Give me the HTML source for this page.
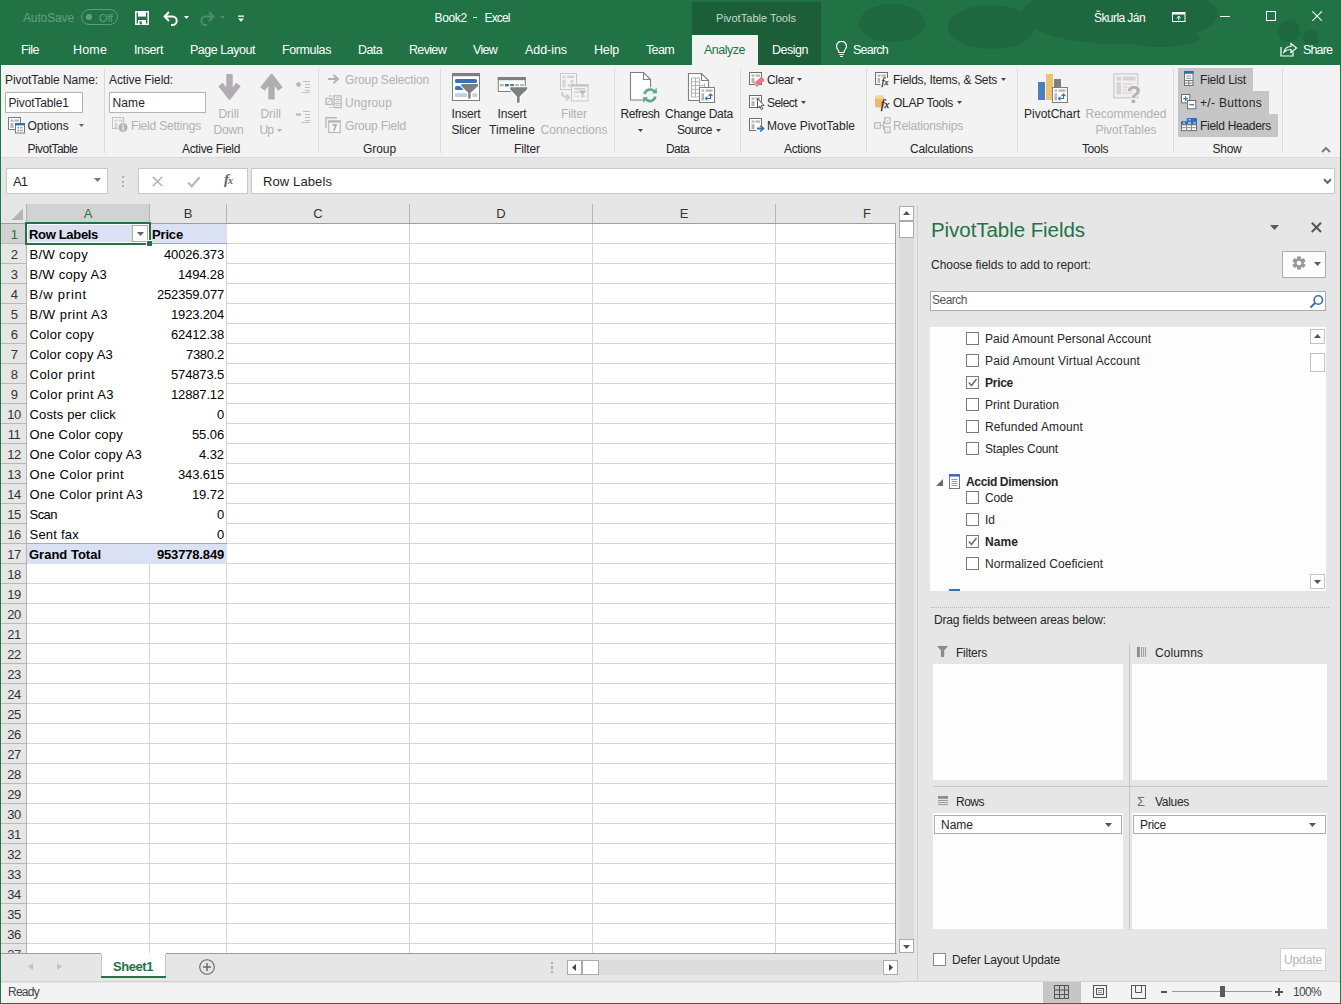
<!DOCTYPE html>
<html><head><meta charset="utf-8"><title>Book2 - Excel</title>
<style>
html,body{margin:0;padding:0}
body{width:1341px;height:1004px;overflow:hidden;position:relative;background:#217346;font-family:"Liberation Sans",sans-serif;}
.t{position:absolute;white-space:pre;line-height:1;color:#262626;font-family:"Liberation Sans",sans-serif;}
.r{position:absolute;display:block}
</style></head><body>
<div class="r" style="left:0px;top:0px;width:1341px;height:65px;background:#217346;"></div>
<svg class="r" style="left:820px;top:0" width="521" height="65" viewBox="820 0 521 65"><g fill="#1e683f"><ellipse cx="892" cy="23" rx="33" ry="19"/><ellipse cx="991" cy="27" rx="43" ry="22"/><ellipse cx="1120" cy="14" rx="98" ry="30"/><ellipse cx="1160" cy="38" rx="40" ry="9"/><circle cx="1289" cy="31" r="11"/><circle cx="1311" cy="38" r="8"/></g></svg>
<div class="r" style="left:692px;top:2px;width:129px;height:63px;background:#1b5e38;"></div>
<div class="r" style="left:692px;top:35px;width:66px;height:30px;background:#f3f3f3;"></div>
<div class="r" style="left:1px;top:65px;width:1339px;height:92px;background:#f3f3f3;"></div>
<div class="r" style="left:1px;top:157px;width:1339px;height:1px;background:#dadada;"></div>
<div class="r" style="left:1px;top:158px;width:1339px;height:824px;background:#e6e6e6;"></div>
<div class="r" style="left:1px;top:982px;width:1339px;height:21px;background:#f3f3f3;"></div>
<span class="t " style="left:23.00px;top:12.00px;font-size:12px;letter-spacing:-0.130px;color:#63a07f;">AutoSave</span>
<div class="r" style="left:81px;top:9px;width:37px;height:16px;border:1px solid #5f9d7c;border-radius:9px;box-sizing:border-box"></div>
<div class="r" style="left:86px;top:14px;width:6px;height:6px;border-radius:3px;background:#63a07f"></div>
<span class="t " style="left:99.00px;top:12.50px;font-size:11px;letter-spacing:-0.157px;color:#63a07f;">Off</span>
<svg class="r" style="left:135px;top:11px" width="14" height="14" viewBox="0 0 14 14"><path d="M0.8 0.8H13.2V13.2H0.8Z" fill="none" stroke="#fff" stroke-width="1.6"/><rect x="3" y="1" width="8" height="4.6" fill="#fff"/><rect x="3" y="9" width="8" height="4.5" fill="#fff"/><rect x="4.6" y="10.4" width="2.2" height="3" fill="#217346"/></svg>
<svg class="r" style="left:162px;top:9.5px" width="18" height="16" viewBox="0 0 18 16"><path d="M3 6.5H10.5A4.2 4.2 0 0 1 10.5 14.9H9" fill="none" stroke="#fff" stroke-width="2"/><path d="M7 2L2.6 6.5L7 11" fill="none" stroke="#fff" stroke-width="2"/></svg>
<svg class="r" style="left:184.0px;top:16.0px" width="5" height="3" viewBox="0 0 5 3"><path d="M0 0H5L2.5 3Z" fill="#fff"/></svg>
<svg class="r" style="left:198px;top:9.5px" width="18" height="16" viewBox="0 0 18 16"><path d="M15 6.5H7.5A4.2 4.2 0 0 0 7.5 14.9H9" fill="none" stroke="#4d8f6c" stroke-width="2"/><path d="M11 2L15.4 6.5L11 11" fill="none" stroke="#4d8f6c" stroke-width="2"/></svg>
<svg class="r" style="left:219.5px;top:16.0px" width="5" height="3" viewBox="0 0 5 3"><path d="M0 0H5L2.5 3Z" fill="#4d8f6c"/></svg>
<svg class="r" style="left:236.5px;top:14.5px" width="8" height="8" viewBox="0 0 8 8"><rect x="1" y="0.5" width="6" height="1.3" fill="#fff"/><path d="M1 3.5H7L4 6.8Z" fill="#fff"/></svg>
<span class="t " style="left:434.50px;top:12.00px;font-size:12px;letter-spacing:-0.365px;color:#fff;">Book2</span>
<div class="r" style="left:473.3px;top:17px;width:3.8px;height:1.2px;background:#fff;"></div>
<span class="t " style="left:484.60px;top:12.00px;font-size:12px;letter-spacing:-0.889px;color:#fff;">Excel</span>
<span class="t " style="left:716.00px;top:12.50px;font-size:11px;letter-spacing:0.045px;color:#c8ddd0;">PivotTable Tools</span>
<span class="t " style="left:1094.00px;top:12.00px;font-size:12px;letter-spacing:-0.570px;color:#fff;">Škurla Ján</span>
<svg class="r" style="left:1172px;top:11.5px" width="14" height="11" viewBox="0 0 14 11"><rect x="0.5" y="0.5" width="12.5" height="9" fill="none" stroke="#fff"/><rect x="0.5" y="0.5" width="12.5" height="2" fill="#fff"/><path d="M6.75 4.2V8.2M4.7 6.2L6.75 4.2L8.8 6.2" fill="none" stroke="#fff"/></svg>
<div class="r" style="left:1220px;top:16px;width:10px;height:1px;background:#fff;"></div>
<div class="r" style="left:1266px;top:11px;width:10px;height:10px;border:1px solid #fff;box-sizing:border-box"></div>
<svg class="r" style="left:1312px;top:11.3px" width="10" height="10" viewBox="0 0 10 10"><path d="M0.3 0.3L9.9 9.9M9.9 0.3L0.3 9.9" stroke="#fff" stroke-width="1.1"/></svg>
<span class="t " style="left:21.00px;top:43.75px;font-size:12.5px;letter-spacing:-0.535px;color:#fff;">File</span>
<span class="t " style="left:73.00px;top:43.75px;font-size:12.5px;letter-spacing:0.164px;color:#fff;">Home</span>
<span class="t " style="left:134.00px;top:43.75px;font-size:12.5px;letter-spacing:-0.377px;color:#fff;">Insert</span>
<span class="t " style="left:190.00px;top:43.75px;font-size:12.5px;letter-spacing:-0.472px;color:#fff;">Page Layout</span>
<span class="t " style="left:282.00px;top:43.75px;font-size:12.5px;letter-spacing:-0.387px;color:#fff;">Formulas</span>
<span class="t " style="left:358.00px;top:43.75px;font-size:12.5px;letter-spacing:-0.601px;color:#fff;">Data</span>
<span class="t " style="left:409.00px;top:43.75px;font-size:12.5px;letter-spacing:-0.664px;color:#fff;">Review</span>
<span class="t " style="left:473.00px;top:43.75px;font-size:12.5px;letter-spacing:-0.717px;color:#fff;">View</span>
<span class="t " style="left:525.00px;top:43.75px;font-size:12.5px;letter-spacing:-0.055px;color:#fff;">Add-ins</span>
<span class="t " style="left:594.00px;top:43.75px;font-size:12.5px;letter-spacing:-0.177px;color:#fff;">Help</span>
<span class="t " style="left:646.00px;top:43.75px;font-size:12.5px;letter-spacing:-0.642px;color:#fff;">Team</span>
<span class="t " style="left:772.00px;top:43.75px;font-size:12.5px;letter-spacing:-0.485px;color:#fff;">Design</span>
<span class="t " style="left:853.00px;top:43.75px;font-size:12.5px;letter-spacing:-0.768px;color:#fff;">Search</span>
<span class="t " style="left:1303.00px;top:43.75px;font-size:12.5px;letter-spacing:-0.871px;color:#fff;">Share</span>
<span class="t " style="left:704.00px;top:43.75px;font-size:12.5px;letter-spacing:-0.496px;color:#217346;">Analyze</span>
<svg class="r" style="left:835px;top:41px" width="13" height="17" viewBox="0 0 13 17"><path d="M4 11.5C4 9 1.5 8 1.5 5.3A5 5 0 0 1 11.5 5.3C11.5 8 9 9 9 11.5Z" fill="none" stroke="#fff" stroke-width="1.2"/><path d="M4.3 13.5H8.7M5 15.5H8" stroke="#fff" stroke-width="1.1"/></svg>
<svg class="r" style="left:1280px;top:41px" width="18" height="16" viewBox="0 0 18 16"><path d="M1 6V15H13V11" fill="none" stroke="#fff" stroke-width="1.2"/><path d="M4 11C5 7 8 5.5 11 5.5V2.5L16.5 7L11 11.5V8.5C8 8.5 6 9 4 11Z" fill="none" stroke="#fff" stroke-width="1.2"/></svg>
<div class="r" style="left:104px;top:69px;width:1px;height:84px;background:#d9d9d9;"></div>
<div class="r" style="left:318px;top:69px;width:1px;height:84px;background:#d9d9d9;"></div>
<div class="r" style="left:440px;top:69px;width:1px;height:84px;background:#d9d9d9;"></div>
<div class="r" style="left:614px;top:69px;width:1px;height:84px;background:#d9d9d9;"></div>
<div class="r" style="left:740px;top:69px;width:1px;height:84px;background:#d9d9d9;"></div>
<div class="r" style="left:866px;top:69px;width:1px;height:84px;background:#d9d9d9;"></div>
<div class="r" style="left:1017px;top:69px;width:1px;height:84px;background:#d9d9d9;"></div>
<div class="r" style="left:1173px;top:69px;width:1px;height:84px;background:#d9d9d9;"></div>
<div class="r" style="left:1282px;top:69px;width:1px;height:84px;background:#d9d9d9;"></div>
<span class="t " style="left:27.50px;top:143.00px;font-size:12px;letter-spacing:-0.537px;">PivotTable</span>
<span class="t " style="left:182.00px;top:143.00px;font-size:12px;letter-spacing:-0.335px;">Active Field</span>
<span class="t " style="left:363.00px;top:143.00px;font-size:12px;letter-spacing:-0.070px;">Group</span>
<span class="t " style="left:514.00px;top:143.00px;font-size:12px;letter-spacing:-0.111px;">Filter</span>
<span class="t " style="left:666.00px;top:143.00px;font-size:12px;letter-spacing:-0.587px;">Data</span>
<span class="t " style="left:784.00px;top:143.00px;font-size:12px;letter-spacing:-0.336px;">Actions</span>
<span class="t " style="left:910.00px;top:143.00px;font-size:12px;letter-spacing:-0.197px;">Calculations</span>
<span class="t " style="left:1082.00px;top:143.00px;font-size:12px;letter-spacing:-0.403px;">Tools</span>
<span class="t " style="left:1212.50px;top:143.00px;font-size:12px;letter-spacing:-0.254px;">Show</span>
<span class="t " style="left:5.00px;top:74.00px;font-size:12px;letter-spacing:-0.065px;">PivotTable Name:</span>
<div class="r" style="left:5px;top:92px;width:78px;height:21px;background:#fff;border:1px solid #b3b3b3;box-sizing:border-box;"></div>
<span class="t " style="left:8.50px;top:97.00px;font-size:12px;letter-spacing:-0.167px;">PivotTable1</span>
<span class="t " style="left:27.50px;top:120.00px;font-size:12px;letter-spacing:-0.022px;">Options</span>
<svg class="r" style="left:79.0px;top:124.2px" width="5" height="3" viewBox="0 0 5 3"><path d="M0 0H5L2.5 3Z" fill="#666"/></svg>
<span class="t " style="left:109.00px;top:74.00px;font-size:12px;letter-spacing:-0.104px;">Active Field:</span>
<div class="r" style="left:109px;top:92px;width:97px;height:21px;background:#fff;border:1px solid #b3b3b3;box-sizing:border-box;"></div>
<span class="t " style="left:112.50px;top:97.00px;font-size:12px;letter-spacing:0.123px;">Name</span>
<span class="t " style="left:131.00px;top:120.00px;font-size:12px;letter-spacing:-0.193px;color:#b2b0b2;">Field Settings</span>
<span class="t " style="left:218.45px;top:108.00px;font-size:12px;letter-spacing:-0.032px;color:#b2b0b2;">Drill</span>
<span class="t " style="left:213.60px;top:124.00px;font-size:12px;letter-spacing:-0.170px;color:#b2b0b2;">Down</span>
<span class="t " style="left:260.45px;top:108.00px;font-size:12px;letter-spacing:-0.032px;color:#b2b0b2;">Drill</span>
<span class="t " style="left:259.50px;top:124.00px;font-size:12px;letter-spacing:-0.920px;color:#b2b0b2;">Up</span>
<svg class="r" style="left:277.0px;top:128.5px" width="5" height="3" viewBox="0 0 5 3"><path d="M0 0H5L2.5 3Z" fill="#b2b0b2"/></svg>
<span class="t " style="left:345.00px;top:74.00px;font-size:12px;letter-spacing:-0.137px;color:#b2b0b2;">Group Selection</span>
<span class="t " style="left:345.00px;top:97.00px;font-size:12px;letter-spacing:0.138px;color:#b2b0b2;">Ungroup</span>
<span class="t " style="left:345.00px;top:120.00px;font-size:12px;letter-spacing:-0.154px;color:#b2b0b2;">Group Field</span>
<span class="t " style="left:451.50px;top:108.00px;font-size:12px;letter-spacing:-0.169px;">Insert</span>
<span class="t " style="left:451.50px;top:124.00px;font-size:12px;letter-spacing:-0.168px;">Slicer</span>
<span class="t " style="left:497.50px;top:108.00px;font-size:12px;letter-spacing:-0.169px;">Insert</span>
<span class="t " style="left:489.00px;top:124.00px;font-size:12px;letter-spacing:0.137px;">Timeline</span>
<span class="t " style="left:561.00px;top:108.00px;font-size:12px;letter-spacing:-0.111px;color:#b2b0b2;">Filter</span>
<span class="t " style="left:540.50px;top:124.00px;font-size:12px;letter-spacing:0.026px;color:#b2b0b2;">Connections</span>
<span class="t " style="left:620.50px;top:108.00px;font-size:12px;letter-spacing:-0.431px;">Refresh</span>
<svg class="r" style="left:638.0px;top:128.5px" width="5" height="3" viewBox="0 0 5 3"><path d="M0 0H5L2.5 3Z" fill="#444"/></svg>
<span class="t " style="left:665.00px;top:108.00px;font-size:12px;letter-spacing:-0.247px;">Change Data</span>
<span class="t " style="left:677.00px;top:124.00px;font-size:12px;letter-spacing:-0.504px;">Source</span>
<svg class="r" style="left:716.0px;top:128.5px" width="5" height="3" viewBox="0 0 5 3"><path d="M0 0H5L2.5 3Z" fill="#444"/></svg>
<span class="t " style="left:767.00px;top:74.00px;font-size:12px;letter-spacing:-0.335px;">Clear</span>
<svg class="r" style="left:797.0px;top:78.0px" width="5" height="3" viewBox="0 0 5 3"><path d="M0 0H5L2.5 3Z" fill="#444"/></svg>
<span class="t " style="left:767.00px;top:97.00px;font-size:12px;letter-spacing:-0.559px;">Select</span>
<svg class="r" style="left:801.0px;top:101.0px" width="5" height="3" viewBox="0 0 5 3"><path d="M0 0H5L2.5 3Z" fill="#444"/></svg>
<span class="t " style="left:767.00px;top:120.00px;font-size:12px;letter-spacing:-0.003px;">Move PivotTable</span>
<span class="t " style="left:893.00px;top:74.00px;font-size:12px;letter-spacing:-0.287px;">Fields, Items, &amp; Sets</span>
<svg class="r" style="left:1001.0px;top:78.0px" width="5" height="3" viewBox="0 0 5 3"><path d="M0 0H5L2.5 3Z" fill="#444"/></svg>
<span class="t " style="left:893.00px;top:97.00px;font-size:12px;letter-spacing:-0.293px;">OLAP Tools</span>
<svg class="r" style="left:957.0px;top:101.0px" width="5" height="3" viewBox="0 0 5 3"><path d="M0 0H5L2.5 3Z" fill="#444"/></svg>
<span class="t " style="left:893.00px;top:120.00px;font-size:12px;letter-spacing:-0.157px;color:#b2b0b2;">Relationships</span>
<span class="t " style="left:1024.00px;top:108.00px;font-size:12px;letter-spacing:-0.002px;">PivotChart</span>
<span class="t " style="left:1085.50px;top:108.00px;font-size:12px;letter-spacing:-0.034px;color:#b2b0b2;">Recommended</span>
<span class="t " style="left:1095.50px;top:124.00px;font-size:12px;letter-spacing:-0.033px;color:#b2b0b2;">PivotTables</span>
<div class="r" style="left:1178px;top:68px;width:75px;height:23px;background:#c6c6c6;"></div>
<div class="r" style="left:1178px;top:91px;width:91px;height:23px;background:#c6c6c6;"></div>
<div class="r" style="left:1178px;top:114px;width:100px;height:23px;background:#c6c6c6;"></div>
<span class="t " style="left:1200.00px;top:74.00px;font-size:12px;letter-spacing:-0.202px;">Field List</span>
<span class="t " style="left:1200.00px;top:97.00px;font-size:12px;letter-spacing:0.330px;">+/- Buttons</span>
<span class="t " style="left:1200.00px;top:120.00px;font-size:12px;letter-spacing:-0.285px;">Field Headers</span>
<svg class="r" style="left:1320.5px;top:145.5px" width="10" height="7" viewBox="0 0 10 7"><path d="M1 6L5 2L9 6" fill="none" stroke="#777" stroke-width="1.8"/></svg>
<div class="r" style="left:6px;top:168px;width:102px;height:26px;background:#fff;border:1px solid #c8c8c8;box-sizing:border-box;"></div>
<span class="t " style="left:13.00px;top:175.00px;font-size:13px;letter-spacing:-0.950px;">A1</span>
<svg class="r" style="left:93.5px;top:178.0px" width="7" height="4" viewBox="0 0 7 4"><path d="M0 0H7L3.5 4Z" fill="#777"/></svg>
<div class="r" style="left:121.8px;top:176px;width:2.2px;height:2.2px;background:#b0b0b0;"></div>
<div class="r" style="left:121.8px;top:180.5px;width:2.2px;height:2.2px;background:#b0b0b0;"></div>
<div class="r" style="left:121.8px;top:185px;width:2.2px;height:2.2px;background:#b0b0b0;"></div>
<div class="r" style="left:138px;top:168px;width:110px;height:26px;background:#fff;border:1px solid #c8c8c8;box-sizing:border-box;"></div>
<svg class="r" style="left:151.5px;top:176px" width="11" height="11" viewBox="0 0 11 11"><path d="M0.8 0.8L10.2 10.2M10.2 0.8L0.8 10.2" stroke="#bbb" stroke-width="1.8"/></svg>
<svg class="r" style="left:186.5px;top:175.5px" width="14" height="12" viewBox="0 0 14 12"><path d="M1 6.5L4.8 10.3L12.6 1.2" fill="none" stroke="#bbb" stroke-width="2.2"/></svg>
<span class="t" style="left:224px;top:172px;font-family:'Liberation Serif',serif;font-style:italic;font-weight:700;font-size:15px;color:#666">f<span style="font-size:10px;margin-left:-1px">x</span></span>
<div class="r" style="left:251px;top:168px;width:1084px;height:26px;background:#fff;border:1px solid #c8c8c8;box-sizing:border-box;"></div>
<span class="t " style="left:263.00px;top:175.00px;font-size:13px;letter-spacing:0.107px;">Row Labels</span>
<svg class="r" style="left:1322.5px;top:177.5px" width="9" height="7" viewBox="0 0 9 7"><path d="M1 1.2L4.5 4.8L8 1.2" fill="none" stroke="#666" stroke-width="2"/></svg>
<div class="r" style="left:1px;top:204px;width:895px;height:749px;background:#fff;"></div>
<div class="r" style="left:1px;top:204px;width:895px;height:19px;background:#e6e6e6;"></div>
<div class="r" style="left:1px;top:204px;width:26px;height:749px;background:#e6e6e6;"></div>
<div class="r" style="left:27px;top:204px;width:123px;height:19px;background:#d2d2d2;"></div>
<div class="r" style="left:1px;top:224px;width:26px;height:19px;background:#d2d2d2;"></div>
<div class="r" style="left:1px;top:223px;width:895px;height:1px;background:#9d9d9d;"></div>
<div class="r" style="left:149px;top:224px;width:1px;height:729px;background:#d4d4d4;"></div>
<div class="r" style="left:149px;top:204px;width:1px;height:19px;background:#b5b5b5;"></div>
<div class="r" style="left:226px;top:224px;width:1px;height:729px;background:#d4d4d4;"></div>
<div class="r" style="left:226px;top:204px;width:1px;height:19px;background:#b5b5b5;"></div>
<div class="r" style="left:409px;top:224px;width:1px;height:729px;background:#d4d4d4;"></div>
<div class="r" style="left:409px;top:204px;width:1px;height:19px;background:#b5b5b5;"></div>
<div class="r" style="left:592px;top:224px;width:1px;height:729px;background:#d4d4d4;"></div>
<div class="r" style="left:592px;top:204px;width:1px;height:19px;background:#b5b5b5;"></div>
<div class="r" style="left:775px;top:224px;width:1px;height:729px;background:#d4d4d4;"></div>
<div class="r" style="left:775px;top:204px;width:1px;height:19px;background:#b5b5b5;"></div>
<div class="r" style="left:27px;top:243px;width:869px;height:1px;background:#d4d4d4;"></div>
<div class="r" style="left:1px;top:243px;width:25px;height:1px;background:#b8b8b8;"></div>
<div class="r" style="left:27px;top:263px;width:869px;height:1px;background:#d4d4d4;"></div>
<div class="r" style="left:1px;top:263px;width:25px;height:1px;background:#b8b8b8;"></div>
<div class="r" style="left:27px;top:283px;width:869px;height:1px;background:#d4d4d4;"></div>
<div class="r" style="left:1px;top:283px;width:25px;height:1px;background:#b8b8b8;"></div>
<div class="r" style="left:27px;top:303px;width:869px;height:1px;background:#d4d4d4;"></div>
<div class="r" style="left:1px;top:303px;width:25px;height:1px;background:#b8b8b8;"></div>
<div class="r" style="left:27px;top:323px;width:869px;height:1px;background:#d4d4d4;"></div>
<div class="r" style="left:1px;top:323px;width:25px;height:1px;background:#b8b8b8;"></div>
<div class="r" style="left:27px;top:343px;width:869px;height:1px;background:#d4d4d4;"></div>
<div class="r" style="left:1px;top:343px;width:25px;height:1px;background:#b8b8b8;"></div>
<div class="r" style="left:27px;top:363px;width:869px;height:1px;background:#d4d4d4;"></div>
<div class="r" style="left:1px;top:363px;width:25px;height:1px;background:#b8b8b8;"></div>
<div class="r" style="left:27px;top:383px;width:869px;height:1px;background:#d4d4d4;"></div>
<div class="r" style="left:1px;top:383px;width:25px;height:1px;background:#b8b8b8;"></div>
<div class="r" style="left:27px;top:403px;width:869px;height:1px;background:#d4d4d4;"></div>
<div class="r" style="left:1px;top:403px;width:25px;height:1px;background:#b8b8b8;"></div>
<div class="r" style="left:27px;top:423px;width:869px;height:1px;background:#d4d4d4;"></div>
<div class="r" style="left:1px;top:423px;width:25px;height:1px;background:#b8b8b8;"></div>
<div class="r" style="left:27px;top:443px;width:869px;height:1px;background:#d4d4d4;"></div>
<div class="r" style="left:1px;top:443px;width:25px;height:1px;background:#b8b8b8;"></div>
<div class="r" style="left:27px;top:463px;width:869px;height:1px;background:#d4d4d4;"></div>
<div class="r" style="left:1px;top:463px;width:25px;height:1px;background:#b8b8b8;"></div>
<div class="r" style="left:27px;top:483px;width:869px;height:1px;background:#d4d4d4;"></div>
<div class="r" style="left:1px;top:483px;width:25px;height:1px;background:#b8b8b8;"></div>
<div class="r" style="left:27px;top:503px;width:869px;height:1px;background:#d4d4d4;"></div>
<div class="r" style="left:1px;top:503px;width:25px;height:1px;background:#b8b8b8;"></div>
<div class="r" style="left:27px;top:523px;width:869px;height:1px;background:#d4d4d4;"></div>
<div class="r" style="left:1px;top:523px;width:25px;height:1px;background:#b8b8b8;"></div>
<div class="r" style="left:27px;top:543px;width:869px;height:1px;background:#d4d4d4;"></div>
<div class="r" style="left:1px;top:543px;width:25px;height:1px;background:#b8b8b8;"></div>
<div class="r" style="left:27px;top:563px;width:869px;height:1px;background:#d4d4d4;"></div>
<div class="r" style="left:1px;top:563px;width:25px;height:1px;background:#b8b8b8;"></div>
<div class="r" style="left:27px;top:583px;width:869px;height:1px;background:#d4d4d4;"></div>
<div class="r" style="left:1px;top:583px;width:25px;height:1px;background:#b8b8b8;"></div>
<div class="r" style="left:27px;top:603px;width:869px;height:1px;background:#d4d4d4;"></div>
<div class="r" style="left:1px;top:603px;width:25px;height:1px;background:#b8b8b8;"></div>
<div class="r" style="left:27px;top:623px;width:869px;height:1px;background:#d4d4d4;"></div>
<div class="r" style="left:1px;top:623px;width:25px;height:1px;background:#b8b8b8;"></div>
<div class="r" style="left:27px;top:643px;width:869px;height:1px;background:#d4d4d4;"></div>
<div class="r" style="left:1px;top:643px;width:25px;height:1px;background:#b8b8b8;"></div>
<div class="r" style="left:27px;top:663px;width:869px;height:1px;background:#d4d4d4;"></div>
<div class="r" style="left:1px;top:663px;width:25px;height:1px;background:#b8b8b8;"></div>
<div class="r" style="left:27px;top:683px;width:869px;height:1px;background:#d4d4d4;"></div>
<div class="r" style="left:1px;top:683px;width:25px;height:1px;background:#b8b8b8;"></div>
<div class="r" style="left:27px;top:703px;width:869px;height:1px;background:#d4d4d4;"></div>
<div class="r" style="left:1px;top:703px;width:25px;height:1px;background:#b8b8b8;"></div>
<div class="r" style="left:27px;top:723px;width:869px;height:1px;background:#d4d4d4;"></div>
<div class="r" style="left:1px;top:723px;width:25px;height:1px;background:#b8b8b8;"></div>
<div class="r" style="left:27px;top:743px;width:869px;height:1px;background:#d4d4d4;"></div>
<div class="r" style="left:1px;top:743px;width:25px;height:1px;background:#b8b8b8;"></div>
<div class="r" style="left:27px;top:763px;width:869px;height:1px;background:#d4d4d4;"></div>
<div class="r" style="left:1px;top:763px;width:25px;height:1px;background:#b8b8b8;"></div>
<div class="r" style="left:27px;top:783px;width:869px;height:1px;background:#d4d4d4;"></div>
<div class="r" style="left:1px;top:783px;width:25px;height:1px;background:#b8b8b8;"></div>
<div class="r" style="left:27px;top:803px;width:869px;height:1px;background:#d4d4d4;"></div>
<div class="r" style="left:1px;top:803px;width:25px;height:1px;background:#b8b8b8;"></div>
<div class="r" style="left:27px;top:823px;width:869px;height:1px;background:#d4d4d4;"></div>
<div class="r" style="left:1px;top:823px;width:25px;height:1px;background:#b8b8b8;"></div>
<div class="r" style="left:27px;top:843px;width:869px;height:1px;background:#d4d4d4;"></div>
<div class="r" style="left:1px;top:843px;width:25px;height:1px;background:#b8b8b8;"></div>
<div class="r" style="left:27px;top:863px;width:869px;height:1px;background:#d4d4d4;"></div>
<div class="r" style="left:1px;top:863px;width:25px;height:1px;background:#b8b8b8;"></div>
<div class="r" style="left:27px;top:883px;width:869px;height:1px;background:#d4d4d4;"></div>
<div class="r" style="left:1px;top:883px;width:25px;height:1px;background:#b8b8b8;"></div>
<div class="r" style="left:27px;top:903px;width:869px;height:1px;background:#d4d4d4;"></div>
<div class="r" style="left:1px;top:903px;width:25px;height:1px;background:#b8b8b8;"></div>
<div class="r" style="left:27px;top:923px;width:869px;height:1px;background:#d4d4d4;"></div>
<div class="r" style="left:1px;top:923px;width:25px;height:1px;background:#b8b8b8;"></div>
<div class="r" style="left:27px;top:943px;width:869px;height:1px;background:#d4d4d4;"></div>
<div class="r" style="left:1px;top:943px;width:25px;height:1px;background:#b8b8b8;"></div>
<div class="r" style="left:895px;top:224px;width:1px;height:729px;background:#9d9d9d;"></div>
<svg class="r" style="left:11px;top:208px" width="13" height="13" viewBox="0 0 13 13"><path d="M12 0.5V12H0.5Z" fill="#b4b4b4"/></svg>
<span class="t " style="left:183.66px;top:207.00px;font-size:13px;letter-spacing:-0.000px;color:#333;">B</span>
<span class="t " style="left:313.31px;top:207.00px;font-size:13px;letter-spacing:-0.000px;color:#333;">C</span>
<span class="t " style="left:496.31px;top:207.00px;font-size:13px;letter-spacing:-0.000px;color:#333;">D</span>
<span class="t " style="left:679.66px;top:207.00px;font-size:13px;letter-spacing:0.000px;color:#333;">E</span>
<span class="t " style="left:863.03px;top:207.00px;font-size:13px;letter-spacing:0.000px;color:#333;">F</span>
<span class="t " style="left:83.66px;top:207.00px;font-size:13px;letter-spacing:0.000px;color:#217346;">A</span>
<span class="t " style="left:10.64px;top:228.00px;font-size:13px;letter-spacing:-0.506px;color:#217346;">1</span>
<span class="t " style="left:10.64px;top:248.00px;font-size:13px;letter-spacing:-0.506px;color:#333;">2</span>
<span class="t " style="left:10.64px;top:268.00px;font-size:13px;letter-spacing:-0.506px;color:#333;">3</span>
<span class="t " style="left:10.64px;top:288.00px;font-size:13px;letter-spacing:-0.506px;color:#333;">4</span>
<span class="t " style="left:10.64px;top:308.00px;font-size:13px;letter-spacing:-0.506px;color:#333;">5</span>
<span class="t " style="left:10.64px;top:328.00px;font-size:13px;letter-spacing:-0.506px;color:#333;">6</span>
<span class="t " style="left:10.64px;top:348.00px;font-size:13px;letter-spacing:-0.506px;color:#333;">7</span>
<span class="t " style="left:10.64px;top:368.00px;font-size:13px;letter-spacing:-0.506px;color:#333;">8</span>
<span class="t " style="left:10.64px;top:388.00px;font-size:13px;letter-spacing:-0.506px;color:#333;">9</span>
<span class="t " style="left:7.28px;top:408.00px;font-size:13px;letter-spacing:-0.506px;color:#333;">10</span>
<span class="t " style="left:7.72px;top:428.00px;font-size:13px;letter-spacing:-0.472px;color:#333;">11</span>
<span class="t " style="left:7.28px;top:448.00px;font-size:13px;letter-spacing:-0.506px;color:#333;">12</span>
<span class="t " style="left:7.28px;top:468.00px;font-size:13px;letter-spacing:-0.506px;color:#333;">13</span>
<span class="t " style="left:7.28px;top:488.00px;font-size:13px;letter-spacing:-0.506px;color:#333;">14</span>
<span class="t " style="left:7.28px;top:508.00px;font-size:13px;letter-spacing:-0.506px;color:#333;">15</span>
<span class="t " style="left:7.28px;top:528.00px;font-size:13px;letter-spacing:-0.506px;color:#333;">16</span>
<span class="t " style="left:7.28px;top:548.00px;font-size:13px;letter-spacing:-0.506px;color:#333;">17</span>
<span class="t " style="left:7.28px;top:568.00px;font-size:13px;letter-spacing:-0.506px;color:#333;">18</span>
<span class="t " style="left:7.28px;top:588.00px;font-size:13px;letter-spacing:-0.506px;color:#333;">19</span>
<span class="t " style="left:7.28px;top:608.00px;font-size:13px;letter-spacing:-0.506px;color:#333;">20</span>
<span class="t " style="left:7.28px;top:628.00px;font-size:13px;letter-spacing:-0.506px;color:#333;">21</span>
<span class="t " style="left:7.28px;top:648.00px;font-size:13px;letter-spacing:-0.506px;color:#333;">22</span>
<span class="t " style="left:7.28px;top:668.00px;font-size:13px;letter-spacing:-0.506px;color:#333;">23</span>
<span class="t " style="left:7.28px;top:688.00px;font-size:13px;letter-spacing:-0.506px;color:#333;">24</span>
<span class="t " style="left:7.28px;top:708.00px;font-size:13px;letter-spacing:-0.506px;color:#333;">25</span>
<span class="t " style="left:7.28px;top:728.00px;font-size:13px;letter-spacing:-0.506px;color:#333;">26</span>
<span class="t " style="left:7.28px;top:748.00px;font-size:13px;letter-spacing:-0.506px;color:#333;">27</span>
<span class="t " style="left:7.28px;top:768.00px;font-size:13px;letter-spacing:-0.506px;color:#333;">28</span>
<span class="t " style="left:7.28px;top:788.00px;font-size:13px;letter-spacing:-0.506px;color:#333;">29</span>
<span class="t " style="left:7.28px;top:808.00px;font-size:13px;letter-spacing:-0.506px;color:#333;">30</span>
<span class="t " style="left:7.28px;top:828.00px;font-size:13px;letter-spacing:-0.506px;color:#333;">31</span>
<span class="t " style="left:7.28px;top:848.00px;font-size:13px;letter-spacing:-0.506px;color:#333;">32</span>
<span class="t " style="left:7.28px;top:868.00px;font-size:13px;letter-spacing:-0.506px;color:#333;">33</span>
<span class="t " style="left:7.28px;top:888.00px;font-size:13px;letter-spacing:-0.506px;color:#333;">34</span>
<span class="t " style="left:7.28px;top:908.00px;font-size:13px;letter-spacing:-0.506px;color:#333;">35</span>
<span class="t " style="left:7.28px;top:928.00px;font-size:13px;letter-spacing:-0.506px;color:#333;">36</span>
<span class="t " style="left:7.30px;top:948.00px;font-size:13px;letter-spacing:-0.530px;color:#444;">37</span>
<div class="r" style="left:1px;top:953px;width:900px;height:30px;background:#e6e6e6;"></div>
<div class="r" style="left:27px;top:224px;width:199px;height:340px;background:#fff;"></div>
<div class="r" style="left:27px;top:224px;width:200px;height:19px;background:#d9e1f2;"></div>
<div class="r" style="left:27px;top:243px;width:200px;height:1px;background:#8ea9db;"></div>
<div class="r" style="left:27px;top:543px;width:200px;height:1px;background:#8ea9db;"></div>
<div class="r" style="left:27px;top:544px;width:200px;height:20px;background:#d9e1f2;"></div>
<span class="t " style="left:29.00px;top:228.00px;font-size:13px;letter-spacing:-0.324px;color:#000;font-weight:700;">Row Labels</span>
<span class="t " style="left:152.00px;top:228.00px;font-size:13px;letter-spacing:-0.160px;color:#000;font-weight:700;">Price</span>
<span class="t " style="left:29.50px;top:248.00px;font-size:13px;letter-spacing:0.359px;color:#000;">B/W copy</span>
<span class="t " style="left:164.00px;top:248.00px;font-size:13px;letter-spacing:-0.161px;color:#000;">40026.373</span>
<span class="t " style="left:29.50px;top:268.00px;font-size:13px;letter-spacing:0.280px;color:#000;">B/W copy A3</span>
<span class="t " style="left:178.00px;top:268.00px;font-size:13px;letter-spacing:-0.142px;color:#000;">1494.28</span>
<span class="t " style="left:29.50px;top:288.00px;font-size:13px;letter-spacing:0.770px;color:#000;">B/w print</span>
<span class="t " style="left:157.00px;top:288.00px;font-size:13px;letter-spacing:-0.168px;color:#000;">252359.077</span>
<span class="t " style="left:29.50px;top:308.00px;font-size:13px;letter-spacing:0.521px;color:#000;">B/W print A3</span>
<span class="t " style="left:171.00px;top:308.00px;font-size:13px;letter-spacing:-0.153px;color:#000;">1923.204</span>
<span class="t " style="left:29.50px;top:328.00px;font-size:13px;letter-spacing:0.236px;color:#000;">Color copy</span>
<span class="t " style="left:171.00px;top:328.00px;font-size:13px;letter-spacing:-0.153px;color:#000;">62412.38</span>
<span class="t " style="left:29.50px;top:348.00px;font-size:13px;letter-spacing:0.197px;color:#000;">Color copy A3</span>
<span class="t " style="left:186.00px;top:348.00px;font-size:13px;letter-spacing:-0.294px;color:#000;">7380.2</span>
<span class="t " style="left:29.50px;top:368.00px;font-size:13px;letter-spacing:0.503px;color:#000;">Color print</span>
<span class="t " style="left:171.00px;top:368.00px;font-size:13px;letter-spacing:-0.153px;color:#000;">574873.5</span>
<span class="t " style="left:29.50px;top:388.00px;font-size:13px;letter-spacing:0.410px;color:#000;">Color print A3</span>
<span class="t " style="left:171.00px;top:388.00px;font-size:13px;letter-spacing:-0.153px;color:#000;">12887.12</span>
<span class="t " style="left:29.50px;top:408.00px;font-size:13px;letter-spacing:0.132px;color:#000;">Costs per click</span>
<span class="t " style="left:217.00px;top:408.00px;font-size:13px;letter-spacing:-0.230px;color:#000;">0</span>
<span class="t " style="left:29.50px;top:428.00px;font-size:13px;letter-spacing:0.227px;color:#000;">One Color copy</span>
<span class="t " style="left:192.00px;top:428.00px;font-size:13px;letter-spacing:-0.106px;color:#000;">55.06</span>
<span class="t " style="left:29.50px;top:448.00px;font-size:13px;letter-spacing:0.199px;color:#000;">One Color copy A3</span>
<span class="t " style="left:199.00px;top:448.00px;font-size:13px;letter-spacing:-0.075px;color:#000;">4.32</span>
<span class="t " style="left:29.50px;top:468.00px;font-size:13px;letter-spacing:0.423px;color:#000;">One Color print</span>
<span class="t " style="left:178.00px;top:468.00px;font-size:13px;letter-spacing:-0.142px;color:#000;">343.615</span>
<span class="t " style="left:29.50px;top:488.00px;font-size:13px;letter-spacing:0.364px;color:#000;">One Color print A3</span>
<span class="t " style="left:192.00px;top:488.00px;font-size:13px;letter-spacing:-0.106px;color:#000;">19.72</span>
<span class="t " style="left:29.50px;top:508.00px;font-size:13px;letter-spacing:-0.533px;color:#000;">Scan</span>
<span class="t " style="left:217.00px;top:508.00px;font-size:13px;letter-spacing:-0.230px;color:#000;">0</span>
<span class="t " style="left:29.50px;top:528.00px;font-size:13px;letter-spacing:0.225px;color:#000;">Sent fax</span>
<span class="t " style="left:217.00px;top:528.00px;font-size:13px;letter-spacing:-0.230px;color:#000;">0</span>
<span class="t " style="left:29.00px;top:548.00px;font-size:13px;letter-spacing:0.002px;color:#000;font-weight:700;">Grand Total</span>
<span class="t " style="left:157.00px;top:548.00px;font-size:13px;letter-spacing:-0.168px;color:#000;font-weight:700;">953778.849</span>
<div class="r" style="left:132px;top:225px;width:16px;height:17px;background:#fcfcfd;border:1px solid #ababab;box-sizing:border-box;"></div>
<svg class="r" style="left:137.0px;top:232.0px" width="7" height="4" viewBox="0 0 7 4"><path d="M0 0H7L3.5 4Z" fill="#606060"/></svg>
<div class="r" style="left:26px;top:204px;width:1px;height:749px;background:#b4b4b4;"></div>
<div class="r" style="left:25px;top:222px;width:126px;height:23px;border:2px solid #217346;box-sizing:border-box"></div>
<div class="r" style="left:27px;top:224px;width:122px;height:19px;border:1px solid #fff;box-sizing:border-box"></div>
<div class="r" style="left:146px;top:240px;width:6px;height:6px;background:#fff;"></div>
<div class="r" style="left:147px;top:241px;width:5px;height:5px;background:#217346;"></div>
<div class="r" style="left:896px;top:204px;width:22px;height:749px;background:#e6e6e6;"></div>
<div class="r" style="left:899px;top:221px;width:15px;height:718px;background:#dcdcdc;"></div>
<div class="r" style="left:899px;top:206px;width:15px;height:15px;background:#fff;border:1px solid #ababab;box-sizing:border-box;"></div>
<svg class="r" style="left:903px;top:211px" width="7" height="4" viewBox="0 0 7 4"><path d="M0 4H7L3.5 0Z" fill="#555"/></svg>
<div class="r" style="left:899px;top:221px;width:15px;height:17px;background:#fff;border:1px solid #ababab;box-sizing:border-box;"></div>
<div class="r" style="left:899px;top:939px;width:15px;height:14px;background:#fff;border:1px solid #ababab;box-sizing:border-box;"></div>
<svg class="r" style="left:903px;top:944.5px" width="7" height="4" viewBox="0 0 7 4"><path d="M0 0H7L3.5 4Z" fill="#555"/></svg>
<div class="r" style="left:1px;top:953px;width:896px;height:1px;background:#9d9d9d;"></div>
<div class="r" style="left:1px;top:954px;width:917px;height:27px;background:#e6e6e6;"></div>
<div class="r" style="left:101px;top:953px;width:65px;height:24px;background:#fff;"></div>
<div class="r" style="left:101px;top:954px;width:1px;height:22px;background:#c6c6c6;"></div>
<div class="r" style="left:165px;top:954px;width:1px;height:22px;background:#c6c6c6;"></div>
<div class="r" style="left:101px;top:976px;width:65px;height:2px;background:#217346;"></div>
<span class="t " style="left:113.00px;top:960.00px;font-size:13px;letter-spacing:-0.438px;color:#217346;font-weight:700;">Sheet1</span>
<svg class="r" style="left:27.5px;top:963px" width="5" height="7" viewBox="0 0 5 7"><path d="M5 0V7L0 3.5Z" fill="#c3c3c3"/></svg>
<svg class="r" style="left:56.5px;top:963px" width="5" height="7" viewBox="0 0 5 7"><path d="M0 0V7L5 3.5Z" fill="#c3c3c3"/></svg>
<svg class="r" style="left:199px;top:959px" width="16" height="16" viewBox="0 0 16 16"><circle cx="8" cy="8" r="7.3" fill="none" stroke="#666" stroke-width="1.1"/><path d="M8 4V12M4 8H12" stroke="#666" stroke-width="1.4"/></svg>
<div class="r" style="left:550.5px;top:962.3px;width:2.2px;height:2.2px;background:#b0b0b0;"></div>
<div class="r" style="left:550.5px;top:966.4px;width:2.2px;height:2.2px;background:#b0b0b0;"></div>
<div class="r" style="left:550.5px;top:970.5px;width:2.2px;height:2.2px;background:#b0b0b0;"></div>
<div class="r" style="left:567px;top:960px;width:315px;height:15px;background:#dcdcdc;"></div>
<div class="r" style="left:567px;top:960px;width:15px;height:15px;background:#fff;border:1px solid #ababab;box-sizing:border-box;"></div>
<svg class="r" style="left:572px;top:964px" width="4" height="7" viewBox="0 0 4 7"><path d="M4 0V7L0 3.5Z" fill="#444"/></svg>
<div class="r" style="left:582px;top:960px;width:17px;height:15px;background:#fff;border:1px solid #ababab;box-sizing:border-box;"></div>
<div class="r" style="left:883px;top:960px;width:15px;height:15px;background:#fff;border:1px solid #ababab;box-sizing:border-box;"></div>
<svg class="r" style="left:889px;top:964px" width="4" height="7" viewBox="0 0 4 7"><path d="M0 0V7L4 3.5Z" fill="#444"/></svg>
<div class="r" style="left:1px;top:981px;width:1339px;height:1px;background:#d2d2d2;"></div>
<span class="t " style="left:8.00px;top:986.00px;font-size:12px;letter-spacing:-0.738px;color:#444;">Ready</span>
<div class="r" style="left:1043px;top:982px;width:38px;height:21px;background:#c6c6c6;"></div>
<svg class="r" style="left:1054px;top:985px" width="15" height="14" viewBox="0 0 15 14"><rect x="0.5" y="0.5" width="14" height="13" fill="none" stroke="#555"/><path d="M5.5 0V14M10.5 0V14M0 5H15M0 9.5H15" stroke="#555"/></svg>
<svg class="r" style="left:1093px;top:985px" width="15" height="14" viewBox="0 0 15 14"><rect x="0.5" y="0.5" width="13" height="12" fill="none" stroke="#555"/><rect x="3.5" y="3.5" width="7" height="6" fill="none" stroke="#555"/><path d="M5 5.5H9M5 7.5H9" stroke="#777" stroke-width="0.8"/></svg>
<svg class="r" style="left:1131px;top:985px" width="15" height="14" viewBox="0 0 15 14"><rect x="0.5" y="0.5" width="14" height="13" fill="none" stroke="#555"/><path d="M4.5 0V7.5H10.5V0" fill="none" stroke="#555"/></svg>
<div class="r" style="left:1161px;top:991px;width:6px;height:2px;background:#555;"></div>
<div class="r" style="left:1172px;top:991px;width:100px;height:1px;background:#9a9a9a;"></div>
<div class="r" style="left:1220px;top:986px;width:5px;height:11px;background:#5a5a5a;"></div>
<div class="r" style="left:1275px;top:991px;width:8px;height:2px;background:#555;"></div>
<div class="r" style="left:1278px;top:988px;width:2px;height:8px;background:#555;"></div>
<span class="t " style="left:1293.00px;top:986.00px;font-size:12px;letter-spacing:-0.673px;color:#444;">100%</span>
<div class="r" style="left:917px;top:206px;width:1px;height:775px;background:#cfcfcf;"></div>
<span class="t " style="left:931.00px;top:220.25px;font-size:20.5px;letter-spacing:-0.057px;color:#217346;">PivotTable Fields</span>
<svg class="r" style="left:1269.8px;top:225.0px" width="9" height="5" viewBox="0 0 9 5"><path d="M0 0H9L4.5 5Z" fill="#5a5a5a"/></svg>
<svg class="r" style="left:1311px;top:222px" width="11" height="11" viewBox="0 0 11 11"><path d="M0.8 0.8L10 10M10 0.8L0.8 10" stroke="#555" stroke-width="2"/></svg>
<span class="t " style="left:931.00px;top:259.00px;font-size:12px;letter-spacing:-0.025px;">Choose fields to add to report:</span>
<div class="r" style="left:1282px;top:251px;width:44px;height:27px;background:#fdfdfd;border:1px solid #ababab;box-sizing:border-box;"></div>
<svg class="r" style="left:1314.1px;top:262.0px" width="7" height="4" viewBox="0 0 7 4"><path d="M0 0H7L3.5 4Z" fill="#5a5a5a"/></svg>
<svg class="r" style="left:1291.6px;top:256.4px" width="14" height="14" viewBox="-7 -7 14 14"><g fill="#999"><rect x="-1.9" y="-6.6" width="3.8" height="13.2" transform="rotate(0)"/><rect x="-1.9" y="-6.6" width="3.8" height="13.2" transform="rotate(60)"/><rect x="-1.9" y="-6.6" width="3.8" height="13.2" transform="rotate(120)"/><circle r="4.8"/></g><circle r="2.3" fill="#fdfdfd"/></svg>
<div class="r" style="left:930px;top:291px;width:396px;height:20px;background:#fff;border:1px solid #ababab;box-sizing:border-box;"></div>
<span class="t " style="left:932.00px;top:294.00px;font-size:12px;letter-spacing:-0.504px;color:#555;">Search</span>
<svg class="r" style="left:1309px;top:293.5px" width="15" height="15" viewBox="0 0 15 15"><circle cx="9.3" cy="6" r="4.2" fill="none" stroke="#3a6fb5" stroke-width="1.6"/><path d="M6 9L1.5 13.5" stroke="#3a6fb5" stroke-width="2"/></svg>
<div class="r" style="left:930px;top:327px;width:396px;height:264px;background:#fdfdfd;"></div>
<div class="r" style="left:1310px;top:329px;width:15px;height:15px;background:#fff;border:1px solid #c3c3c3;box-sizing:border-box;"></div>
<svg class="r" style="left:1314px;top:334px" width="7" height="4" viewBox="0 0 7 4"><path d="M0 4H7L3.5 0Z" fill="#555"/></svg>
<div class="r" style="left:1310px;top:353px;width:15px;height:19px;background:#fff;border:1px solid #c3c3c3;box-sizing:border-box;"></div>
<div class="r" style="left:1310px;top:574px;width:15px;height:15px;background:#fff;border:1px solid #c3c3c3;box-sizing:border-box;"></div>
<svg class="r" style="left:1314px;top:580px" width="7" height="4" viewBox="0 0 7 4"><path d="M0 0H7L3.5 4Z" fill="#555"/></svg>
<div class="r" style="left:966px;top:332px;width:13px;height:13px;background:#fff;border:1px solid #7a7a7a;box-sizing:border-box;"></div>
<span class="t " style="left:985.00px;top:333.00px;font-size:12px;letter-spacing:0.044px;">Paid Amount Personal Account</span>
<div class="r" style="left:966px;top:354px;width:13px;height:13px;background:#fff;border:1px solid #7a7a7a;box-sizing:border-box;"></div>
<span class="t " style="left:985.00px;top:355.00px;font-size:12px;letter-spacing:0.140px;">Paid Amount Virtual Account</span>
<div class="r" style="left:966px;top:376px;width:13px;height:13px;background:#fff;border:1px solid #7a7a7a;box-sizing:border-box;"></div>
<svg class="r" style="left:966px;top:376px" width="13" height="13" viewBox="0 0 13 13"><path d="M2.8 6.5L5.5 9.5L10.5 3" fill="none" stroke="#707070" stroke-width="1.6"/></svg>
<span class="t " style="left:985.00px;top:377.00px;font-size:12px;letter-spacing:-0.271px;font-weight:700;">Price</span>
<div class="r" style="left:966px;top:398px;width:13px;height:13px;background:#fff;border:1px solid #7a7a7a;box-sizing:border-box;"></div>
<span class="t " style="left:985.00px;top:399.00px;font-size:12px;letter-spacing:0.045px;">Print Duration</span>
<div class="r" style="left:966px;top:420px;width:13px;height:13px;background:#fff;border:1px solid #7a7a7a;box-sizing:border-box;"></div>
<span class="t " style="left:985.00px;top:421.00px;font-size:12px;letter-spacing:0.129px;">Refunded Amount</span>
<div class="r" style="left:966px;top:442px;width:13px;height:13px;background:#fff;border:1px solid #7a7a7a;box-sizing:border-box;"></div>
<span class="t " style="left:985.00px;top:443.00px;font-size:12px;letter-spacing:-0.183px;">Staples Count</span>
<div class="r" style="left:966px;top:491px;width:13px;height:13px;background:#fff;border:1px solid #7a7a7a;box-sizing:border-box;"></div>
<span class="t " style="left:985.00px;top:492.00px;font-size:12px;letter-spacing:-0.172px;">Code</span>
<div class="r" style="left:966px;top:513px;width:13px;height:13px;background:#fff;border:1px solid #7a7a7a;box-sizing:border-box;"></div>
<span class="t " style="left:985.00px;top:514.00px;font-size:12px;letter-spacing:-0.004px;">Id</span>
<div class="r" style="left:966px;top:535px;width:13px;height:13px;background:#fff;border:1px solid #7a7a7a;box-sizing:border-box;"></div>
<svg class="r" style="left:966px;top:535px" width="13" height="13" viewBox="0 0 13 13"><path d="M2.8 6.5L5.5 9.5L10.5 3" fill="none" stroke="#707070" stroke-width="1.6"/></svg>
<span class="t " style="left:985.00px;top:536.00px;font-size:12px;letter-spacing:0.079px;font-weight:700;">Name</span>
<div class="r" style="left:966px;top:557px;width:13px;height:13px;background:#fff;border:1px solid #7a7a7a;box-sizing:border-box;"></div>
<span class="t " style="left:985.00px;top:558.00px;font-size:12px;letter-spacing:0.029px;">Normalized Coeficient</span>
<span class="t " style="left:966.00px;top:476.00px;font-size:12px;letter-spacing:-0.357px;font-weight:700;">Accid Dimension</span>
<svg class="r" style="left:935.5px;top:478.5px" width="7" height="7" viewBox="0 0 7 7"><path d="M7 0V7H0Z" fill="#6a6a6a"/></svg>
<svg class="r" style="left:949px;top:474px" width="11" height="15" viewBox="0 0 11 15"><rect x="0.5" y="0.5" width="10" height="14" fill="#fff" stroke="#777"/><rect x="0" y="0" width="11" height="2.6" fill="#3a6fb5"/><path d="M2.5 5.5H8.5M2.5 7.5H8.5M2.5 9.5H8.5M2.5 11.5H8.5" stroke="#999"/></svg>
<div class="r" style="left:949px;top:589px;width:11px;height:2px;background:#3a6fb5;"></div>
<div class="r" style="left:931px;top:607px;width:398px;height:0;border-top:1px dotted #b5b5b5"></div>
<span class="t " style="left:934.00px;top:614.00px;font-size:12px;letter-spacing:-0.170px;">Drag fields between areas below:</span>
<svg class="r" style="left:937px;top:646px" width="11" height="11" viewBox="0 0 11 11"><path d="M0 0H11L7.2 4.6V11H3.9V4.6Z" fill="#8c8c8c"/></svg>
<span class="t " style="left:956.00px;top:647.00px;font-size:12px;letter-spacing:-0.238px;">Filters</span>
<svg class="r" style="left:1137px;top:647px" width="10" height="10" viewBox="0 0 10 10"><rect x="0" y="0" width="2.8" height="10" fill="#8c8c8c"/><rect x="4" y="0" width="1" height="10" fill="#9a9a9a"/><rect x="6.1" y="0" width="1" height="10" fill="#9a9a9a"/><rect x="8.1" y="0" width="1" height="10" fill="#9a9a9a"/></svg>
<span class="t " style="left:1155.00px;top:647.00px;font-size:12px;letter-spacing:0.093px;">Columns</span>
<div class="r" style="left:933px;top:664px;width:190px;height:116px;background:#fdfdfd;"></div>
<div class="r" style="left:1132px;top:664px;width:195px;height:116px;background:#fdfdfd;"></div>
<div class="r" style="left:1129px;top:644px;width:1px;height:286px;background:#c6c6c6;"></div>
<div class="r" style="left:933px;top:786px;width:395px;height:1px;background:#c6c6c6;"></div>
<svg class="r" style="left:938px;top:796px" width="10" height="10" viewBox="0 0 10 10"><rect x="0" y="0" width="10" height="2.8" fill="#8c8c8c"/><rect y="4" x="0" height="1" width="10" fill="#9a9a9a"/><rect y="6.1" x="0" height="1" width="10" fill="#9a9a9a"/><rect y="8.1" x="0" height="1" width="10" fill="#9a9a9a"/></svg>
<span class="t " style="left:956.00px;top:796.00px;font-size:12px;letter-spacing:-0.502px;">Rows</span>
<span class="t " style="left:1137.00px;top:795.00px;font-size:13px;letter-spacing:0.964px;color:#707070;">Σ</span>
<span class="t " style="left:1155.00px;top:796.00px;font-size:12px;letter-spacing:-0.300px;">Values</span>
<div class="r" style="left:933px;top:813px;width:190px;height:116px;background:#fdfdfd;"></div>
<div class="r" style="left:1132px;top:813px;width:195px;height:116px;background:#fdfdfd;"></div>
<div class="r" style="left:934px;top:815px;width:188px;height:19px;background:#fff;border:1px solid #ababab;box-sizing:border-box;"></div>
<span class="t " style="left:941.00px;top:819.00px;font-size:12px;letter-spacing:-0.002px;">Name</span>
<svg class="r" style="left:1104.5px;top:822.5px" width="7" height="4" viewBox="0 0 7 4"><path d="M0 0H7L3.5 4Z" fill="#555"/></svg>
<div class="r" style="left:1133px;top:815px;width:193px;height:19px;background:#fff;border:1px solid #ababab;box-sizing:border-box;"></div>
<span class="t " style="left:1140.00px;top:819.00px;font-size:12px;letter-spacing:-0.268px;">Price</span>
<svg class="r" style="left:1308.5px;top:822.5px" width="7" height="4" viewBox="0 0 7 4"><path d="M0 0H7L3.5 4Z" fill="#555"/></svg>
<div class="r" style="left:933px;top:953px;width:13px;height:13px;background:#fff;border:1px solid #8a8a8a;box-sizing:border-box;"></div>
<span class="t " style="left:952.00px;top:954.00px;font-size:12px;letter-spacing:-0.144px;">Defer Layout Update</span>
<div class="r" style="left:1280px;top:948px;width:46px;height:23px;background:#fdfdfd;border:1px solid #d0d0d0;box-sizing:border-box;"></div>
<span class="t " style="left:1284.00px;top:954.00px;font-size:12px;letter-spacing:-0.116px;color:#b5b5b5;">Update</span>
<svg class="r" style="left:8px;top:117px" width="17" height="17" viewBox="0 0 17 17"><rect x="0.5" y="0.5" width="12" height="12" fill="#fff" stroke="#7a7a7a"/><rect x="2.5" y="2.5" width="3" height="2.2" fill="#b4b4b4"/><rect x="6.5" y="2.5" width="4.5" height="2.2" fill="#b4b4b4"/><rect x="2.5" y="6" width="3" height="5" fill="#b4b4b4"/><rect x="7.5" y="6.5" width="9" height="9.5" fill="#fff" stroke="#7a7a7a"/><rect x="7" y="6" width="10" height="2.4" fill="#2f6fb7"/><rect x="9.5" y="10" width="1.6" height="1.6" fill="#8a8a8a"/><rect x="12" y="10.3" width="2.6" height="1" fill="#8a8a8a"/><rect x="9.5" y="12.8" width="1.6" height="1.6" fill="#8a8a8a"/><rect x="12" y="13.1" width="2.6" height="1" fill="#8a8a8a"/></svg>
<svg class="r" style="left:112px;top:117px" width="17" height="17" viewBox="0 0 17 17"><rect x="0.5" y="0.5" width="11" height="11" fill="#f7f7f7" stroke="#c2c2c2"/><rect x="2.5" y="2.5" width="3" height="2.2" fill="#d4d4d4"/><rect x="6.5" y="2.5" width="4.5" height="2.2" fill="#d4d4d4"/><rect x="2.5" y="6" width="3" height="5" fill="#d4d4d4"/><circle cx="11" cy="10.5" r="5" fill="#b4b4b4" stroke="#f3f3f3"/><rect x="10.3" y="9.7" width="1.5" height="3.6" fill="#f3f3f3"/><rect x="10.3" y="7.4" width="1.5" height="1.5" fill="#f3f3f3"/></svg>
<svg class="r" style="left:217px;top:72px" width="26" height="30" viewBox="0 0 26 30"><path d="M12.5 2V22" stroke="#b0aeb0" stroke-width="6.4" fill="none"/><path d="M3.5 12.5L12.5 24L21.5 12.5" stroke="#b0aeb0" stroke-width="5.6" fill="none"/></svg>
<svg class="r" style="left:259px;top:73.5px" width="26" height="30" viewBox="0 0 26 30"><path d="M12.5 25.5V6" stroke="#b0aeb0" stroke-width="6.4" fill="none"/><path d="M3.5 15L12.5 3.5L21.5 15" stroke="#b0aeb0" stroke-width="5.6" fill="none"/></svg>
<svg class="r" style="left:295px;top:80px" width="16" height="14" viewBox="0 0 16 14"><path d="M1 4.5H6M3.5 2V7" stroke="#b4b2b4" stroke-width="2"/><path d="M8 1.5H15M10 4.5H15M10 7.5H15M10 10.5H15M7 12.5H15" stroke="#bfbdbf" stroke-width="1.2"/></svg>
<svg class="r" style="left:295px;top:110px" width="16" height="14" viewBox="0 0 16 14"><path d="M1 4.5H6" stroke="#b4b2b4" stroke-width="2"/><path d="M8 1.5H15M10 4.5H15M10 7.5H15M10 10.5H15M7 12.5H15" stroke="#bfbdbf" stroke-width="1.2"/></svg>
<svg class="r" style="left:327px;top:74px" width="14" height="10" viewBox="0 0 14 10"><path d="M1 5H11" stroke="#b4b2b4" stroke-width="2"/><path d="M6.5 1L11 5L6.5 9" fill="none" stroke="#b4b2b4" stroke-width="2"/></svg>
<svg class="r" style="left:325px;top:95px" width="18" height="14" viewBox="0 0 18 14"><rect x="1" y="3.5" width="6" height="6" fill="none" stroke="#b9b7b9" stroke-width="1.2"/><path d="M1.5 9L6.5 4" stroke="#b9b7b9"/><path d="M4 0.8H7.5M4 12.5H7.5" stroke="#b9b7b9" stroke-width="1.2" stroke-dasharray="2 1"/><rect x="9" y="0.8" width="7.2" height="11.8" fill="none" stroke="#b9b7b9" stroke-width="1.2"/><path d="M9 4.7H16M9 8.7H16" stroke="#b9b7b9" stroke-width="1"/><path d="M11 2.8H14.5M11 6.7H14.5M11 10.7H14.5" stroke="#c9c7c9" stroke-width="1"/></svg>
<svg class="r" style="left:325px;top:117px" width="17" height="17" viewBox="0 0 17 17"><path d="M1 11V0.8H12" fill="none" stroke="#b9b7b9" stroke-width="1.4"/><rect x="3.8" y="4" width="11.4" height="11.5" fill="#f9f7f9" stroke="#b9b7b9" stroke-width="1.2"/><rect x="3.3" y="3.5" width="12.4" height="2.2" fill="#b9b7b9"/><path d="M7.2 8H11.2L8.8 13.6" fill="none" stroke="#a9a7a9" stroke-width="1.5"/></svg>
<svg class="r" style="left:452px;top:73px" width="28" height="28" viewBox="0 0 28 28"><rect x="0.5" y="0.5" width="27" height="27" fill="#fff" stroke="#7f7f7f"/><rect x="0" y="0" width="28" height="3.2" fill="#7f7f7f"/><rect x="3" y="6" width="22" height="4" rx="1.5" fill="#3a74b8"/><rect x="3" y="13" width="8.5" height="4" rx="1.5" fill="#3a74b8"/><rect x="3" y="20.2" width="12" height="3.8" rx="1" fill="#bdd0e9"/><rect x="20.5" y="20.2" width="4.8" height="3.8" rx="1" fill="#bdd0e9"/><path d="M8.3 10.2H27V13.6L19.6 20.3V26.5H15.2V20.3L8.3 13.6Z" fill="#fff"/><path d="M9.3 11.1H26V13.1L18.6 19.8V25.5H16.2V19.8L9.3 13.1Z" fill="#7f7f7f"/></svg>
<svg class="r" style="left:497px;top:76px" width="32" height="28" viewBox="0 0 32 28"><rect x="1.3" y="1.5" width="27" height="14" fill="#fff" stroke="#7f7f7f"/><rect x="0.8" y="1" width="28" height="3.2" fill="#7f7f7f"/><rect x="3" y="8" width="3.6" height="2.4" fill="#b4b4b4"/><rect x="8" y="8" width="3.8" height="2.4" fill="#3a74b8"/><rect x="13.2" y="8" width="3.6" height="2.4" fill="#3a74b8"/><rect x="18.2" y="8" width="3.6" height="2.4" fill="#b4b4b4"/><rect x="23.2" y="8" width="3.6" height="2.4" fill="#b4b4b4"/><path d="M12.2 10.2H31.2V13.8L23.6 20.9V27.7H19V20.9L12.2 13.8Z" fill="#fff"/><path d="M13.2 11.2H30.2V13.3L22.6 20.4V26.7H20V20.4L13.2 13.3Z" fill="#7f7f7f"/></svg>
<svg class="r" style="left:560px;top:73px" width="29" height="29" viewBox="0 0 29 29"><rect x="0.5" y="0.5" width="16" height="16" fill="#f6f4f6" stroke="#c9c6c9"/><rect x="2.5" y="2.5" width="3" height="2.6" fill="#d6d3d6"/><rect x="7" y="2.5" width="7.5" height="2.6" fill="#d6d3d6"/><rect x="2.5" y="6.5" width="3" height="8" fill="#d6d3d6"/><path d="M12 12V7M10 9L12 7L14 9M13.5 12.5H8M10 10.5L8 12.5L10 14.5" fill="none" stroke="#c9c6c9"/><rect x="11.5" y="11.5" width="16.5" height="16.5" fill="#f6f4f6" stroke="#c9c6c9"/><rect x="11" y="11" width="17.5" height="2.6" fill="#c9c6c9"/><rect x="14" y="15" width="11" height="1.6" fill="#d0cdd0"/><rect x="14" y="18.5" width="5" height="1.6" fill="#d0cdd0"/><rect x="14" y="22.5" width="5" height="1.6" fill="#ddd"/><rect x="24" y="22.5" width="2" height="1.6" fill="#ddd"/><path d="M18.5 17.6H26.5L23.3 21V24.5H21.7V21Z" fill="#bcb9bc"/><path d="M2 19C2 23 4 24.5 8 24.5" fill="none" stroke="#cfcccf" stroke-width="2"/><path d="M6 21.5L9.3 24.5L6 27.5" fill="none" stroke="#cfcccf" stroke-width="1.8"/></svg>
<svg class="r" style="left:629px;top:71px" width="30" height="33" viewBox="0 0 30 33"><path d="M1.5 1.5H14.5L21.5 8.5V29H1.5Z" fill="#fff" stroke="#7f7f7f" stroke-width="1.1"/><path d="M14.5 1.5V8.5H21.5" fill="none" stroke="#7f7f7f" stroke-width="1.1"/><circle cx="21" cy="24.3" r="8.2" fill="#f3f3f3"/><path d="M15.6 23A5.6 5.6 0 0 1 25.3 20.4" fill="none" stroke="#5fa78a" stroke-width="2.6"/><path d="M23.2 22.6L28 22.3L27.6 16.6Z" fill="#5fa78a"/><path d="M26.4 25.6A5.6 5.6 0 0 1 16.7 28.2" fill="none" stroke="#5fa78a" stroke-width="2.6"/><path d="M18.8 26L14 26.3L14.4 32Z" fill="#5fa78a"/></svg>
<svg class="r" style="left:687px;top:72px" width="30" height="32" viewBox="0 0 30 32"><path d="M1.5 1.5H14.5L21.5 8.5V28.5H1.5Z" fill="#fff" stroke="#7f7f7f" stroke-width="1.1"/><path d="M14.5 1.5V8.5H21.5" fill="none" stroke="#7f7f7f" stroke-width="1.1"/><path d="M4.5 6V25H12.5V6ZM8.5 6V25M4.5 9.8H12.5M4.5 13.6H12.5M4.5 17.4H12.5M4.5 21.2H12.5M12.5 13.6H17.5M17.5 11.5V16" fill="none" stroke="#b0b0b0" stroke-width="1"/><rect x="12.5" y="15.5" width="15" height="15" fill="#fff" stroke="#7f7f7f"/><rect x="14.5" y="17.5" width="2.6" height="2.2" fill="#b4b4b4"/><rect x="18.5" y="17.5" width="7" height="2.2" fill="#b4b4b4"/><rect x="14.5" y="21.3" width="2.6" height="7" fill="#b4b4b4"/><path d="M23.5 22V26.5H18.5M21.5 24L23.5 22L25.5 24M20.4 24.6L18.5 26.5L20.4 28.4" fill="none" stroke="#2f6fb7" stroke-width="1.1"/></svg>
<svg class="r" style="left:749px;top:72px" width="16" height="16" viewBox="0 0 16 16"><rect x="0.5" y="0.5" width="12" height="12" fill="#fff" stroke="#6e6e6e"/><rect x="2.5" y="2.5" width="3" height="2.2" fill="#b4b4b4"/><rect x="6.5" y="2.5" width="4.5" height="2.2" fill="#b4b4b4"/><rect x="2.5" y="6" width="3" height="5" fill="#b4b4b4"/><g transform="rotate(-40 10 10)"><rect x="5" y="7.5" width="10.5" height="5" rx="0.8" fill="#e8768a"/><rect x="5" y="7.5" width="2.2" height="5" fill="#ee9aa8"/></g></svg>
<svg class="r" style="left:749px;top:95px" width="16" height="16" viewBox="0 0 16 16"><rect x="0.5" y="0.5" width="12" height="12" fill="#fff" stroke="#6e6e6e"/><rect x="2.5" y="2.5" width="3" height="2.2" fill="#b4b4b4"/><rect x="6.5" y="2.5" width="4.5" height="2.2" fill="#b4b4b4"/><rect x="2.5" y="6" width="3" height="5" fill="#b4b4b4"/><path d="M8.5 3.5V13L10.8 11L12.3 14.5L13.8 13.8L12.3 10.4H15Z" fill="#fff" stroke="#444" stroke-width="0.9"/></svg>
<svg class="r" style="left:749px;top:118px" width="16" height="16" viewBox="0 0 16 16"><rect x="0.5" y="0.5" width="12" height="12" fill="#fff" stroke="#6e6e6e"/><rect x="2.5" y="2.5" width="3" height="2.2" fill="#b4b4b4"/><rect x="6.5" y="2.5" width="4.5" height="2.2" fill="#b4b4b4"/><rect x="2.5" y="6" width="3" height="5" fill="#b4b4b4"/><rect x="7" y="7.5" width="9" height="7.5" fill="#f3f3f3"/><path d="M8 10.5H14" stroke="#2f6fb7" stroke-width="1.8"/><path d="M11.3 7.6L14.4 10.5L11.3 13.4" fill="none" stroke="#2f6fb7" stroke-width="1.7"/></svg>
<svg class="r" style="left:875px;top:72px" width="17" height="17" viewBox="0 0 17 17"><rect x="0.5" y="0.5" width="12" height="12" fill="#fff" stroke="#6e6e6e"/><rect x="2.5" y="2.5" width="3" height="2.2" fill="#b4b4b4"/><rect x="6.5" y="2.5" width="4.5" height="2.2" fill="#b4b4b4"/><rect x="2.5" y="6" width="3" height="5" fill="#b4b4b4"/><rect x="5.5" y="6" width="10" height="9" fill="#f3f3f3"/><rect x="5.5" y="6" width="7" height="6.5" fill="#fff"/><text x="6.6" y="12.6" font-family="Liberation Serif,serif" font-style="italic" font-size="10.5" fill="#222" stroke="#222" stroke-width="0.25">f<tspan font-size="8.5" dy="0.5">x</tspan></text></svg>
<svg class="r" style="left:874px;top:94px" width="18" height="18" viewBox="0 0 18 18"><path d="M1 3V11.5A4.6 2 0 0 0 10.2 11.5V3Z" fill="#e9b96e"/><ellipse cx="5.6" cy="3" rx="4.6" ry="2" fill="#f3d29b"/><text x="6.8" y="13.6" font-family="Liberation Serif,serif" font-style="italic" font-size="13.5" fill="#222" stroke="#222" stroke-width="0.25">f<tspan font-size="10.5" dy="0.5">x</tspan></text></svg>
<svg class="r" style="left:874px;top:117px" width="17" height="17" viewBox="0 0 17 17"><path d="M6.5 8.5H9.5M9.5 4.5V12.5M9.5 4.5H11M9.5 12.5H11" fill="none" stroke="#bbb8bb" stroke-width="1.2"/><rect x="0.7" y="5.7" width="5.6" height="5.6" fill="#f7f5f7" stroke="#bbb8bb" stroke-width="1.2"/><rect x="10.7" y="0.7" width="5.3" height="5.6" fill="#f7f5f7" stroke="#bbb8bb" stroke-width="1.2"/><rect x="10.7" y="10" width="5.3" height="5.6" fill="#f7f5f7" stroke="#bbb8bb" stroke-width="1.2"/><path d="M2.6 8.8H4.4M12.6 3.8H14.2M12.6 13.1H14.2" stroke="#bbb8bb"/></svg>
<svg class="r" style="left:1037px;top:73px" width="32" height="31" viewBox="0 0 32 31"><rect x="1" y="9" width="7" height="18" fill="#4a80bd"/><rect x="9" y="1" width="7" height="26" fill="#eec36f"/><rect x="17" y="6" width="7" height="9" fill="#7f7f7f"/><rect x="15.5" y="14.5" width="15" height="15" fill="#fff" stroke="#7f7f7f"/><rect x="17.5" y="16.5" width="2.6" height="2.2" fill="#b4b4b4"/><rect x="21.5" y="16.5" width="7" height="2.2" fill="#b4b4b4"/><rect x="17.5" y="20.3" width="2.6" height="7" fill="#b4b4b4"/><path d="M26.5 21V25.5H21.5M24.5 23L26.5 21L28.5 23M23.4 23.6L21.5 25.5L23.4 27.4" fill="none" stroke="#2f6fb7" stroke-width="1.1"/></svg>
<svg class="r" style="left:1113px;top:73px" width="30" height="31" viewBox="0 0 30 31"><rect x="0.8" y="0.8" width="24" height="24" fill="#f1eff1" stroke="#cfcccf" stroke-width="1.3"/><rect x="3.5" y="3.5" width="4.5" height="4" fill="#d6d3d6"/><rect x="9.5" y="3.5" width="13" height="4" fill="#d6d3d6"/><rect x="3.5" y="9.5" width="4.5" height="12" fill="#d6d3d6"/><path d="M9.5 11H20M9.5 14H20M9.5 17H20M9.5 20H20" stroke="#dcd9dc" stroke-width="1.4"/><text x="13.5" y="29.5" font-family="Liberation Sans,sans-serif" font-weight="700" font-size="24" fill="#f3f3f3" stroke="#f3f3f3" stroke-width="2">?</text><text x="13.5" y="29.5" font-family="Liberation Sans,sans-serif" font-weight="700" font-size="24" fill="#b4b1b4">?</text></svg>
<svg class="r" style="left:1184px;top:71px" width="10" height="15" viewBox="0 0 10 15"><rect x="0.5" y="0.5" width="8.5" height="14" fill="#fff" stroke="#6e6e6e"/><rect x="0" y="0" width="9.5" height="2.8" fill="#2f6fb7"/><path d="M2.3 5H7.3M2.3 7.3H7.3" stroke="#8a8a8a"/><path d="M0.5 9.5H9M4.75 9.5V14.5M0.5 12H9" stroke="#7a7a7a"/></svg>
<svg class="r" style="left:1181px;top:94px" width="17" height="17" viewBox="0 0 17 17"><rect x="0.5" y="0.5" width="8.3" height="8.3" fill="#fff" stroke="#6e6e6e"/><path d="M2.3 4.6H7M4.65 2.3V7" stroke="#2f6fb7" stroke-width="1.2"/><rect x="6.5" y="6.5" width="8.3" height="8.3" fill="#fff" stroke="#6e6e6e"/><path d="M8.3 10.7H13" stroke="#2f6fb7" stroke-width="1.2"/></svg>
<svg class="r" style="left:1181px;top:118px" width="17" height="14" viewBox="0 0 17 14"><rect x="5.8" y="0" width="10.2" height="3.6" fill="#2f6fb7"/><rect x="0" y="3.2" width="16" height="3.6" fill="#2f6fb7"/><path d="M7.5 1.8H9.5M2 5H4M7 5H10M12.5 5H14.5" stroke="#fff"/><rect x="0.5" y="6.8" width="15" height="5.8" fill="#fff" stroke="#6e6e6e"/><path d="M5.5 6.8V12.6M10.5 6.8V12.6M0.5 9.7H15.5" stroke="#8a8a8a"/></svg>
</body></html>
